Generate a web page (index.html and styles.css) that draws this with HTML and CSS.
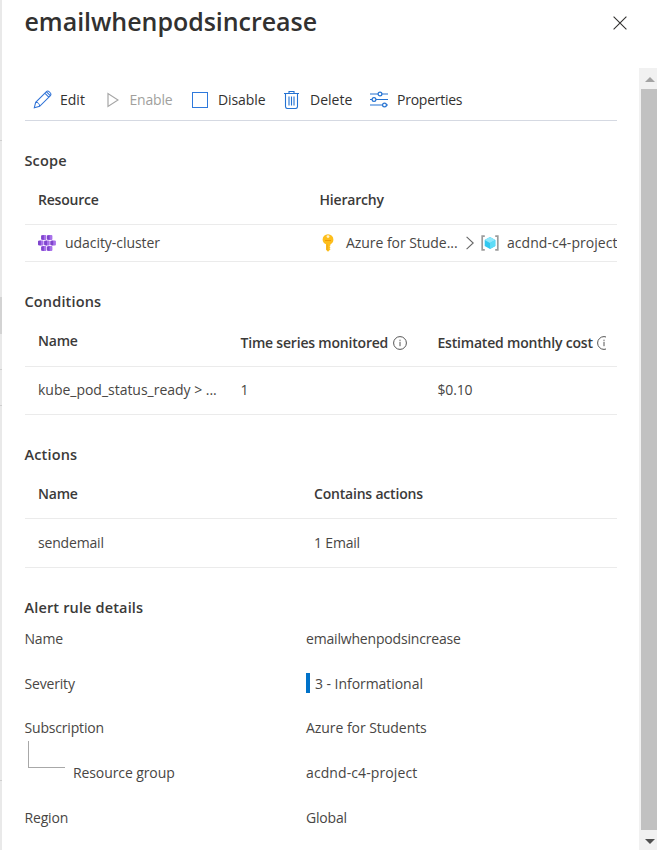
FILE: index.html
```html
<!DOCTYPE html>
<html lang="en">
<head>
<meta charset="utf-8">
<title>emailwhenpodsincrease</title>
<link rel="stylesheet" href="styles.css">
</head>
<body>
<div class="page">
  <div class="edge"><i class="e1"></i><i class="e2"></i><i class="e3"></i><i class="e4"></i></div>
  <div class="panel">
    <header class="head">
      <h1>emailwhenpodsincrease</h1>
      <svg class="close" width="14" height="14" viewBox="0 0 14 14"><path d="M.6.6l12.800 12.800M13.400.6L.6 13.400" fill="none" stroke="#323130" stroke-width="1.100"/></svg>
    </header>
    <div class="body">
      <main class="content">
        <nav class="toolbar">
          <div class="cmd c-edit">
            <svg width="19" height="19" viewBox="0 0 20 20"><path d="M1.400 18.600l1.400-5.600L13.900 1.900a2.300 2.300 0 0 1 3.200 0l1 1a2.300 2.300 0 0 1 0 3.200L7 17.200zM12.400 3.400l4.200 4.200M14.200 1.900l4 4M2.800 13c2.300 0 4.200 1.900 4.200 4.200" fill="none" stroke="#2f72d6" stroke-width="1.100"/></svg>
            <span>Edit</span></div>
          <div class="cmd c-enable off">
            <svg width="12" height="16" viewBox="0 0 12 16"><path d="M1 1.500v13L11 8z" fill="none" stroke="#a6a6a6" stroke-width="1.200"/></svg>
            <span>Enable</span></div>
          <div class="cmd c-disable">
            <svg width="16" height="16" viewBox="0 0 16 16"><rect x=".5" y=".5" width="15" height="15" fill="none" stroke="#2f79dc"/></svg>
            <span>Disable</span></div>
          <div class="cmd c-delete">
            <svg width="15" height="18" viewBox="0 0 15 18"><path d="M0 2.500h15M5 2.500v-2h5v2M1.500 2.500v13q0 2 2 2h8q2 0 2-2v-13M5 5.500v9M7.500 5.500v9M10 5.500v9" fill="none" stroke="#2472d2" stroke-width="1.100"/></svg>
            <span>Delete</span></div>
          <div class="cmd c-props">
            <svg width="18" height="18" viewBox="0 0 18 18"><g fill="none" stroke="#2472d2" stroke-width="1.200"><path d="M0 3h8M12 3h6M0 8.500h2M6 8.500h12M0 14h12.500M16.500 14H18"/><circle cx="10" cy="3" r="1.900"/><circle cx="4" cy="8.500" r="1.900"/><circle cx="14.500" cy="14" r="1.900"/></g></svg>
            <span>Properties</span></div>
        </nav>

        <section>
          <h2>Scope</h2>
          <div class="row th scope"><span>Resource</span><span>Hierarchy</span></div>
          <div class="row td scope short">
            <div class="cell">
              <svg width="18" height="16" viewBox="0 0 18 16"><g fill="#a871ea"><rect x="3.200" y="0" width="5.200" height="4.900" rx="1"/><rect x="9" y="0" width="5.400" height="4.900" rx="1"/><rect x="0" y="5.500" width="5.500" height="5" rx="1"/><rect x="6.200" y="5.500" width="5.500" height="5" rx="1"/><rect x="12.400" y="5.500" width="5.500" height="5" rx="1"/><rect x="3.200" y="11.100" width="5.200" height="4.900" rx="1"/><rect x="9" y="11.100" width="5.400" height="4.900" rx="1"/></g><path d="M3.200.8L5.800.1v4.800L3.200 4.300zM9 .8l2.600-.7v4.800L9 4.300zM0 6.300l2.800-.8v5L0 9.800zM6.200 6.300L9 5.500v5l-2.800-.7zM12.400 6.300l2.800-.8v5l-2.800-.7zM3.200 11.900l2.600-.8V16l-2.600-.7zM9 11.900l2.600-.8V16L9 15.300z" fill="#7f45cc"/></svg>
              <span class="wide">udacity-cluster</span>
            </div>
            <div class="cell hier">
              <svg class="key" width="12" height="18" viewBox="0 0 12 18"><path d="M6 .2a5.400 5.400 0 0 1 5.400 5.500c0 2-1.200 3.700-2.900 4.600v1l-1 1 1 1-1 1 1 1L6 17.800 4 15.800v-5.500A5.300 5.300 0 0 1 .6 5.700 5.400 5.400 0 0 1 6 .2z" fill="#fdbe1c"/><path d="M4.700 10.500v5.200l.9.900v-6.100z" fill="#eda51a"/><circle cx="6" cy="2.600" r="1.400" fill="#fff3cf"/><path d="M3 6.500h6" stroke="#f29b00" stroke-width="1"/></svg>
              <span class="wide">Azure for Stude...</span>
              <svg class="chev" width="8" height="14" viewBox="0 0 8 14"><path d="M.6.8L7.200 7 .6 13.200" fill="none" stroke="#666" stroke-width="1.100"/></svg>
              <svg class="rg" width="18" height="16" viewBox="0 0 18 16"><path d="M3.800 1.200H1.200v13.600h2.600M14.200 1.200h2.600v13.600h-2.600" fill="none" stroke="#9b9b9b" stroke-width="1.700"/><path d="M9 2l5.300 3v6L9 14l-5.300-3V5z" fill="#32c8f0"/><path d="M9 2l5.300 3L9 8 3.700 5z" fill="#8ee7fb"/><path d="M9 8l5.300-3v6L9 14z" fill="#5fdcf7"/></svg>
              <span class="rg-name">acdnd-c4-project</span>
            </div>
          </div>
        </section>

        <section>
          <h2>Conditions</h2>
          <div class="row th cond">
            <span>Name</span>
            <div class="cell low"><span>Time series monitored</span><svg width="14" height="14" viewBox="0 0 14 14"><circle cx="7" cy="7" r="6.400" fill="none" stroke="#555"/><path d="M7 5.800v4.400M7 3.700v1.200" stroke="#555"/></svg></div>
            <div class="cell low clip"><span>Estimated monthly cost</span><svg width="14" height="14" viewBox="0 0 14 14"><circle cx="7" cy="7" r="6.400" fill="none" stroke="#555"/><path d="M7 5.800v4.400M7 3.700v1.200" stroke="#555"/></svg></div>
          </div>
          <div class="row td cond rise"><span class="metric">kube_pod_status_ready &gt; ...</span><span>1</span><span>$0.10</span></div>
        </section>

        <section>
          <h2>Actions</h2>
          <div class="row th act"><span>Name</span><span>Contains actions</span></div>
          <div class="row td act tall"><span>sendemail</span><span>1 Email</span></div>
        </section>

        <section class="details">
          <h2>Alert rule details</h2>
          <dl>
            <div class="kv"><dt>Name</dt><dd>emailwhenpodsincrease</dd></div>
            <div class="kv"><dt>Severity</dt><dd class="wide"><i class="sev"></i>3 - Informational</dd></div>
            <div class="kv rise"><dt>Subscription</dt><dd class="wide">Azure for Students</dd></div>
            <div class="kv"><dt class="child"><i class="elbow"></i>Resource group</dt><dd class="wider">acdnd-c4-project</dd></div>
            <div class="kv"><dt>Region</dt><dd>Global</dd></div>
          </dl>
        </section>
      </main>
      <div class="scroll">
        <svg width="10" height="5" viewBox="0 0 10 5"><path d="M5 0l5 5H0z" fill="#a3a3a3"/></svg>
        <div class="thumb"></div>
        <svg width="10" height="5" viewBox="0 0 10 5"><path d="M0 0h10L5 5z" fill="#505050"/></svg>
      </div>
    </div>
  </div>
</div>
</body>
</html>
```
FILE: styles.css
```css
* { box-sizing: border-box; }
body { margin: 0; background: #fff; color: #484644; font: 14px/20px "Open Sans", "Noto Sans", sans-serif; letter-spacing: -0.18px; overflow: hidden; }
h1, h2, dl, dd { margin: 0; }
svg { display: block; flex: none; }
span { white-space: nowrap; }
.page { display: flex; width: 657px; height: 850px; }
.edge { flex: none; width: 2px; background: #e9e9e9; display: flex; flex-direction: column; }
.edge i { height: 1px; background: #cfcfcf; flex: none; }
.edge .e1 { margin-top: 140px; }
.edge .e2 { margin-top: 156px; height: 37px; background: #d3d3d3; }
.edge .e3 { margin-top: 35px; }
.edge .e4 { margin-top: 35px; }
.edge::after { content: ""; height: 1px; margin-top: 374px; background: #cfcfcf; }
.panel { flex: 1; min-width: 0; display: flex; flex-direction: column; background: #fff; }
.head { height: 68px; display: flex; justify-content: space-between; padding: 4px 30.5px 0 22.5px; flex: none; }
h1 { font-size: 25px; line-height: 34px; font-weight: 550; color: #323130; letter-spacing: -0.04px; }
.close { margin-top: 12px; }
.body { flex: 1; min-height: 0; display: flex; }
.content { width: 637px; padding: 11px 22px 0 22.5px; flex: none; }
.toolbar { height: 42px; display: flex; align-items: center; border-bottom: 1px solid #d5d9e2; color: #323130; padding-left: 8px; }
.cmd { display: flex; align-items: center; flex: none; }
.c-edit { width: 74px; gap: 8.5px; letter-spacing: 0; }
.c-enable { width: 85.5px; gap: 11px; }
.c-disable { width: 92px; gap: 10px; letter-spacing: -0.1px; }
.c-delete { width: 86px; gap: 11px; letter-spacing: 0; }
.c-props { gap: 9px; letter-spacing: -0.25px; }
.off { color: #a19f9d; }
h2 { margin-top: 26px; height: 27px; font-size: 14.5px; line-height: 27px; font-weight: 550; color: #3b3a39; letter-spacing: 0.15px; }
.row { display: grid; align-items: center; padding-left: 13.5px; border-bottom: 1px solid #ebebeb; overflow: hidden; }
.th { height: 51px; padding-top: 1px; font-weight: 550; color: #3b3a39; letter-spacing: -0.2px; }
.td { height: 48px; }
.th.cond { height: 52px; padding-top: 0; }
.td.short { height: 37px; }
.td.tall { height: 49px; }
.rise { padding-bottom: 2px; }
.scope { grid-template-columns: 281.5px 1fr; }
.cond { grid-template-columns: 202.5px 197px 168.5px; }
.act { grid-template-columns: 276px 1fr; }
.cell { display: flex; align-items: center; gap: 9px; }
.wide { letter-spacing: -0.05px; }
.wider { letter-spacing: 0.1px; }
.rg-name { letter-spacing: 0.05px; }
.metric { letter-spacing: -0.02px; }
.hier { gap: 0; padding-left: 2px; }
.key { margin-right: 12.5px; }
.chev { margin: 0 7px 0 8px; }
.rg { margin-right: 8.5px; }
.low { padding-top: 4px; gap: 4.500px; }
.clip { overflow: hidden; }
.details h2 { margin-top: 29px; height: 20px; line-height: 21px; }
.kv { display: flex; height: 44.7px; align-items: center; }
dt { width: 281.5px; display: flex; align-items: center; }
dd { display: flex; align-items: center; gap: 5px; }
.sev { width: 4px; height: 20px; background: #0072c9; margin-bottom: 2px; }
.child { gap: 8px; padding-left: 3.5px; letter-spacing: -0.1px; }
.elbow { width: 37px; height: 27px; border: solid #a8a8a8; border-width: 0 0 1px 1px; margin-top: -37px; }
.scroll { flex: 1; background: #f1f1f1; display: flex; flex-direction: column; align-items: center; justify-content: space-between; padding: 9px 0 6px 2px; }
.scroll svg { margin-left: 2px; }
.thumb { width: 100%; flex: none; height: 741px; margin-top: -3px; background: #c1c1c1; }
```
